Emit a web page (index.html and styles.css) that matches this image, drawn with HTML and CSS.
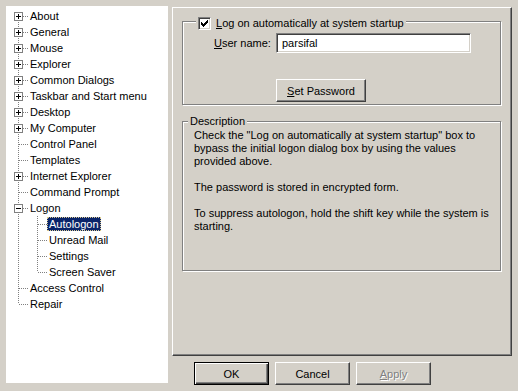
FILE: index.html
```html
<!DOCTYPE html>
<html lang="en">

<head>
  <meta charset="UTF-8">
  <title>Autologon</title>
  <link rel="stylesheet" href="styles.css">
</head>

<body>
  <div class="window">
    <div class="tree-pane">
      <ul class="tree">
        <li><div class="row"><span class="node"><svg class="box" width="9" height="9"><rect x="0.5" y="0.5" width="8" height="8" fill="#fff" stroke="#808080"/><path d="M2 4.5h5M4.5 2v5" stroke="#000"/></svg></span><span class="label">About</span></div></li>
        <li><div class="row"><span class="node"><svg class="box" width="9" height="9"><rect x="0.5" y="0.5" width="8" height="8" fill="#fff" stroke="#808080"/><path d="M2 4.5h5M4.5 2v5" stroke="#000"/></svg></span><span class="label">General</span></div></li>
        <li><div class="row"><span class="node"><svg class="box" width="9" height="9"><rect x="0.5" y="0.5" width="8" height="8" fill="#fff" stroke="#808080"/><path d="M2 4.5h5M4.5 2v5" stroke="#000"/></svg></span><span class="label">Mouse</span></div></li>
        <li><div class="row"><span class="node"><svg class="box" width="9" height="9"><rect x="0.5" y="0.5" width="8" height="8" fill="#fff" stroke="#808080"/><path d="M2 4.5h5M4.5 2v5" stroke="#000"/></svg></span><span class="label">Explorer</span></div></li>
        <li><div class="row"><span class="node"><svg class="box" width="9" height="9"><rect x="0.5" y="0.5" width="8" height="8" fill="#fff" stroke="#808080"/><path d="M2 4.5h5M4.5 2v5" stroke="#000"/></svg></span><span class="label">Common Dialogs</span></div></li>
        <li><div class="row"><span class="node"><svg class="box" width="9" height="9"><rect x="0.5" y="0.5" width="8" height="8" fill="#fff" stroke="#808080"/><path d="M2 4.5h5M4.5 2v5" stroke="#000"/></svg></span><span class="label">Taskbar and Start menu</span></div></li>
        <li><div class="row"><span class="node"><svg class="box" width="9" height="9"><rect x="0.5" y="0.5" width="8" height="8" fill="#fff" stroke="#808080"/><path d="M2 4.5h5M4.5 2v5" stroke="#000"/></svg></span><span class="label">Desktop</span></div></li>
        <li><div class="row"><span class="node"><svg class="box" width="9" height="9"><rect x="0.5" y="0.5" width="8" height="8" fill="#fff" stroke="#808080"/><path d="M2 4.5h5M4.5 2v5" stroke="#000"/></svg></span><span class="label">My Computer</span></div></li>
        <li><div class="row"><span class="node"></span><span class="label">Control Panel</span></div></li>
        <li><div class="row"><span class="node"></span><span class="label">Templates</span></div></li>
        <li><div class="row"><span class="node"><svg class="box" width="9" height="9"><rect x="0.5" y="0.5" width="8" height="8" fill="#fff" stroke="#808080"/><path d="M2 4.5h5M4.5 2v5" stroke="#000"/></svg></span><span class="label">Internet Explorer</span></div></li>
        <li><div class="row"><span class="node"></span><span class="label">Command Prompt</span></div></li>
        <li>
          <div class="row"><span class="node"><svg class="box" width="9" height="9"><rect x="0.5" y="0.5" width="8" height="8" fill="#fff" stroke="#808080"/><path d="M2 4.5h5" stroke="#000"/></svg></span><span class="label">Logon</span></div>
          <ul class="sub">
            <li><div class="row"><span class="node"></span><span class="label sel">Autologon</span></div></li>
            <li><div class="row"><span class="node"></span><span class="label">Unread Mail</span></div></li>
            <li><div class="row"><span class="node"></span><span class="label">Settings</span></div></li>
            <li><div class="row"><span class="node"></span><span class="label">Screen Saver</span></div></li>
          </ul>
        </li>
        <li><div class="row"><span class="node"></span><span class="label">Access Control</span></div></li>
        <li><div class="row"><span class="node"></span><span class="label">Repair</span></div></li>
      </ul>
    </div>

    <div class="side">
      <div class="page">
        <div class="group logon-group">
          <label class="group-title">
            <span class="check"><svg width="7" height="7"><path d="M0 2h1v3H0zM1 3h1v3H1zM2 4h1v3H2zM3 3h1v3H3zM4 2h1v3H4zM5 1h1v3H5zM6 0h1v3H6z"/></svg></span>
            <span><u>L</u>og on automatically at system startup</span>
          </label>
          <div class="field">
            <span class="field-label"><u>U</u>ser name:</span>
            <input class="edit" type="text" value="parsifal">
          </div>
          <button class="btn set-pass"><u>S</u>et Password</button>
        </div>

        <div class="group desc-group">
          <div class="group-title">Description</div>
          <div class="desc">
            <p>Check the "Log on automatically at system startup" box to<br>bypass the initial logon dialog box by using the values<br>provided above.</p>
            <p>The password is stored in encrypted form.</p>
            <p>To suppress autologon, hold the shift key while the system is<br>starting.</p>
          </div>
        </div>
      </div>

      <div class="buttons">
        <button class="btn default">OK</button>
        <button class="btn">Cancel</button>
        <button class="btn" disabled><u>A</u>pply</button>
      </div>
    </div>
  </div>
</body>

</html>
```

FILE: styles.css
```css
body {
  margin: 0;
  background: #d4d0c8;
  font-family: "Liberation Sans", Arial, sans-serif;
  font-size: 11px;
  color: #000;
}

.window {
  display: flex;
  padding: 6px 0 0 6px;
}

/* tree */

.tree-pane {
  width: 162px;
  height: 377px;
  background: #fff;
}

.tree,
.sub {
  list-style: none;
  margin: 0;
  position: relative;
}

.tree {
  padding: 2px 0 0 3px;
}

.sub {
  padding: 0 0 0 19px;
}

.tree::before,
.sub::before {
  content: "";
  position: absolute;
  width: 1px;
  bottom: 8px;
  background: repeating-linear-gradient(to bottom, #808080 0 1px, transparent 1px 2px);
}

.tree::before {
  left: 12px;
  top: 10px;
}

.sub::before {
  left: 28px;
  top: 0;
}

.row {
  display: flex;
  align-items: center;
  height: 16px;
}

.node {
  flex: none;
  align-self: stretch;
  width: 19px;
  background: repeating-linear-gradient(to right, #808080 0 1px, transparent 1px 2px) 10px 8px / 9px 1px no-repeat;
}

.box {
  position: relative;
  display: block;
  margin: 4px 0 0 5px;
}

.label {
  padding: 0 2px;
  line-height: 14px;
  white-space: nowrap;
}

.label.sel {
  background: #0a246a;
  color: #fff;
  outline: 1px dotted #d8c890;
  outline-offset: -1px;
}

/* property page */

.side {
  margin-left: 4px;
  padding-top: 1px;
}

.page {
  width: 340px;
  height: 349px;
  box-sizing: border-box;
  border: 1px solid;
  border-color: #fff #404040 #404040 #fff;
  box-shadow: inset -1px -1px #808080;
  padding: 13px 0 0 9px;
}

.group {
  width: 319px;
  box-sizing: border-box;
  border: 1px solid #808080;
  box-shadow: inset 1px 1px #fff, 1px 1px #fff;
}

.group-title {
  display: flex;
  align-items: center;
  width: fit-content;
  height: 13px;
  line-height: 13px;
  padding: 0 2px;
  background: #d4d0c8;
  white-space: nowrap;
}

.logon-group {
  height: 84px;
}

.logon-group .group-title {
  margin: -5px 0 0 13px;
}

.check {
  width: 13px;
  height: 13px;
  box-sizing: border-box;
  margin-right: 5px;
  background: #fff;
  border: 1px solid;
  border-color: #808080 #fff #fff #808080;
  box-shadow: inset 1px 1px #404040, inset -1px -1px #d4d0c8;
}

.check svg {
  display: block;
  margin: 2px;
}

.field {
  display: flex;
  align-items: center;
  margin: 3px 0 0 31px;
}

.field-label {
  width: 62px;
}

.edit {
  width: 195px;
  height: 20px;
  box-sizing: border-box;
  margin: 0;
  padding: 0 0 0 5px;
  font: inherit;
  color: #000;
  background: #fff;
  border: 1px solid;
  border-color: #808080 #fff #fff #808080;
  box-shadow: inset 1px 1px #404040, inset -1px -1px #d4d0c8;
  outline: none;
}

.btn {
  display: block;
  width: 75px;
  height: 23px;
  box-sizing: border-box;
  margin: 0;
  padding: 0;
  font: inherit;
  color: #000;
  background: #d4d0c8;
  border: 1px solid;
  border-color: #fff #404040 #404040 #fff;
  box-shadow: inset -1px -1px #808080;
}

.btn.default {
  border-color: #000;
  box-shadow: inset 1px 1px #fff, inset -1px -1px #404040, inset -2px -2px #808080;
}

.btn:disabled {
  color: #808080;
  text-shadow: 1px 1px #fff;
}

.set-pass {
  width: 90px;
  margin: 26px 0 0 93px;
}

.desc-group {
  height: 150px;
  margin-top: 16px;
}

.desc-group .group-title {
  margin: -7px 0 0 5px;
}

.desc {
  margin: 1px 0 0 11px;
  line-height: 13px;
  white-space: nowrap;
}

.desc p {
  margin: 0 0 13px;
}

.buttons {
  display: flex;
  gap: 6px;
  margin: 6px 0 0 22px;
}
```
